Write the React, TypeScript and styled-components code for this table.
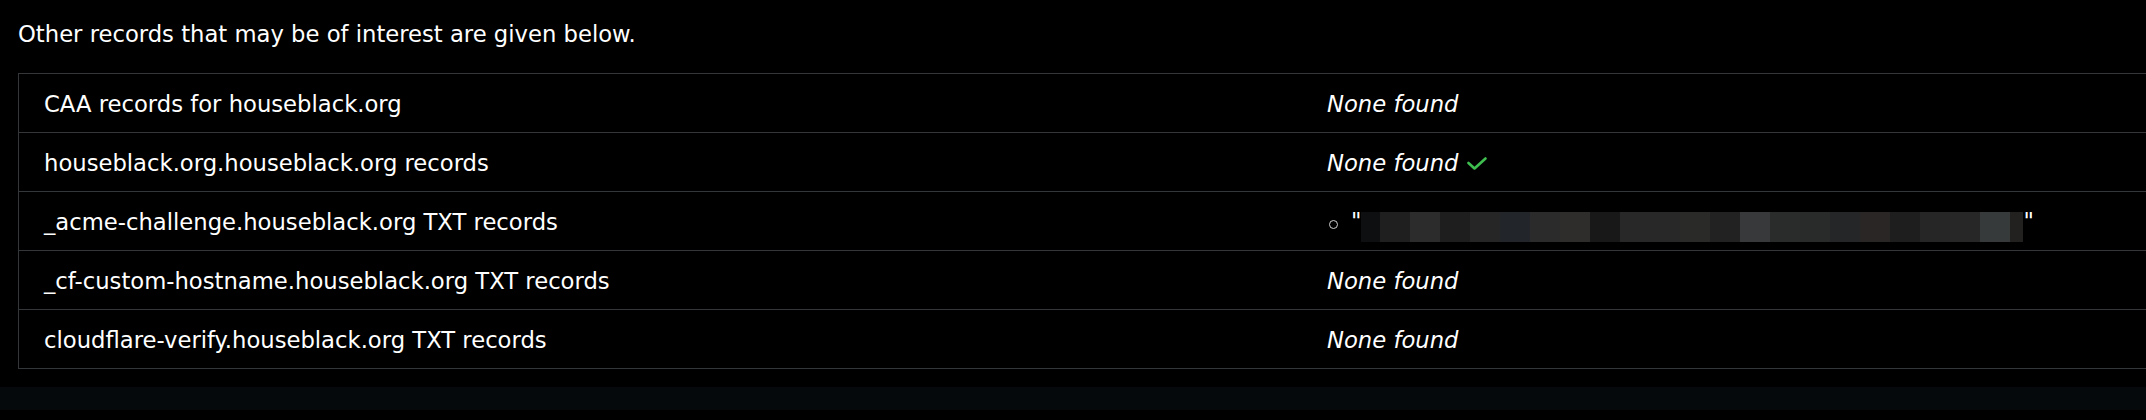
import React from 'react';
import styled, { createGlobalStyle } from 'styled-components';

type RecordRow = {
  name: string;
  result: 'none' | 'none-ok' | 'txt';
};

const records: RecordRow[] = [
  { name: 'CAA records for houseblack.org', result: 'none' },
  { name: 'houseblack.org.houseblack.org records', result: 'none-ok' },
  { name: '_acme-challenge.houseblack.org TXT records', result: 'txt' },
  { name: '_cf-custom-hostname.houseblack.org TXT records', result: 'none' },
  { name: 'cloudflare-verify.houseblack.org TXT records', result: 'none' },
];

// pixelated (redacted) TXT value, one entry per 30px cell
const redactCells: { w: number; c: string }[] = [
  { w: 19, c: '#0e0f11' },
  { w: 30, c: '#1f1f1f' },
  { w: 30, c: '#2b2c2b' },
  { w: 30, c: '#1e1e1e' },
  { w: 30, c: '#262626' },
  { w: 30, c: '#22262a' },
  { w: 30, c: '#2b2b2b' },
  { w: 30, c: '#2e2d2b' },
  { w: 30, c: '#181818' },
  { w: 30, c: '#282828' },
  { w: 30, c: '#282828' },
  { w: 30, c: '#2a2a28' },
  { w: 30, c: '#222222' },
  { w: 30, c: '#38393b' },
  { w: 30, c: '#2a2b2b' },
  { w: 30, c: '#292b2a' },
  { w: 30, c: '#252628' },
  { w: 30, c: '#2a2626' },
  { w: 30, c: '#1e1e1e' },
  { w: 30, c: '#262626' },
  { w: 30, c: '#262726' },
  { w: 30, c: '#373a3b' },
  { w: 13, c: '#222120' },
];

const GlobalStyle = createGlobalStyle`
  html, body {
    margin: 0;
    padding: 0;
    background: #000;
    overflow: hidden;
  }
  body {
    font-family: 'DejaVu Sans', Verdana, sans-serif;
    color: #fff;
  }
`;

const Page = styled.main`
  width: 2146px;
  height: 420px;
  overflow: hidden;
  padding-top: 19px;
  box-sizing: border-box;
`;

const Intro = styled.p`
  margin: 0 0 0 18px;
  font-size: 22.7px;
  line-height: 30px;
  height: 54px;
`;

const Table = styled.div`
  margin-left: 18px;
  width: 2600px;
  border: 1px solid #33373a;
`;

const Row = styled.div`
  display: grid;
  grid-template-columns: 1283px 1fr;
  height: 58px;
  & + & {
    border-top: 1px solid #33373a;
  }
`;

const Cell = styled.div<{ $italic?: boolean }>`
  display: flex;
  align-items: center;
  padding: 1px 25px 0;
  font-size: 22.7px;
  font-style: ${(p) => (p.$italic ? 'italic' : 'normal')};
  white-space: nowrap;
`;

const Check = styled.svg`
  width: 20px;
  height: 13px;
  margin: 2px 0 0 9px;
  flex: none;
`;

const Bullet = styled.span`
  width: 7px;
  height: 7px;
  border: 1px solid #cfcfcf;
  border-radius: 50%;
  margin: 6px 13px 0 2px;
`;

const Quote = styled.span`
  align-self: flex-start;
  margin-top: 17px;
  line-height: 22px;
`;

const Redacted = styled.span`
  display: flex;
  height: 30px;
  margin-top: 11px;
`;

const Pixel = styled.span<{ $w: number; $c: string }>`
  width: ${(p) => p.$w}px;
  background: ${(p) => p.$c};
`;

const Footer = styled.div`
  margin-top: 18px;
  height: 23px;
  background: #06090b;
`;

const ResultCell = ({ result }: { result: RecordRow['result'] }) => {
  if (result === 'txt') {
    return (
      <Cell>
        <Bullet />
        <Quote>"</Quote>
        <Redacted>
          {redactCells.map((cell, i) => (
            <Pixel key={i} $w={cell.w} $c={cell.c} />
          ))}
        </Redacted>
        <Quote>"</Quote>
      </Cell>
    );
  }
  return (
    <Cell $italic>
      None found
      {result === 'none-ok' && (
        <Check viewBox='0 0 20 13'>
          <polyline
            points='1.5,6 7.5,11.5 18.5,1.5'
            fill='none'
            stroke='#3fbe50'
            strokeWidth='2.6'
            strokeLinecap='round'
            strokeLinejoin='round'
          />
        </Check>
      )}
    </Cell>
  );
};

export default function App() {
  return (
    <Page>
      <GlobalStyle />
      <Intro>Other records that may be of interest are given below.</Intro>
      <Table>
        {records.map((r) => (
          <Row key={r.name}>
            <Cell>{r.name}</Cell>
            <ResultCell result={r.result} />
          </Row>
        ))}
      </Table>
      <Footer />
    </Page>
  );
}
